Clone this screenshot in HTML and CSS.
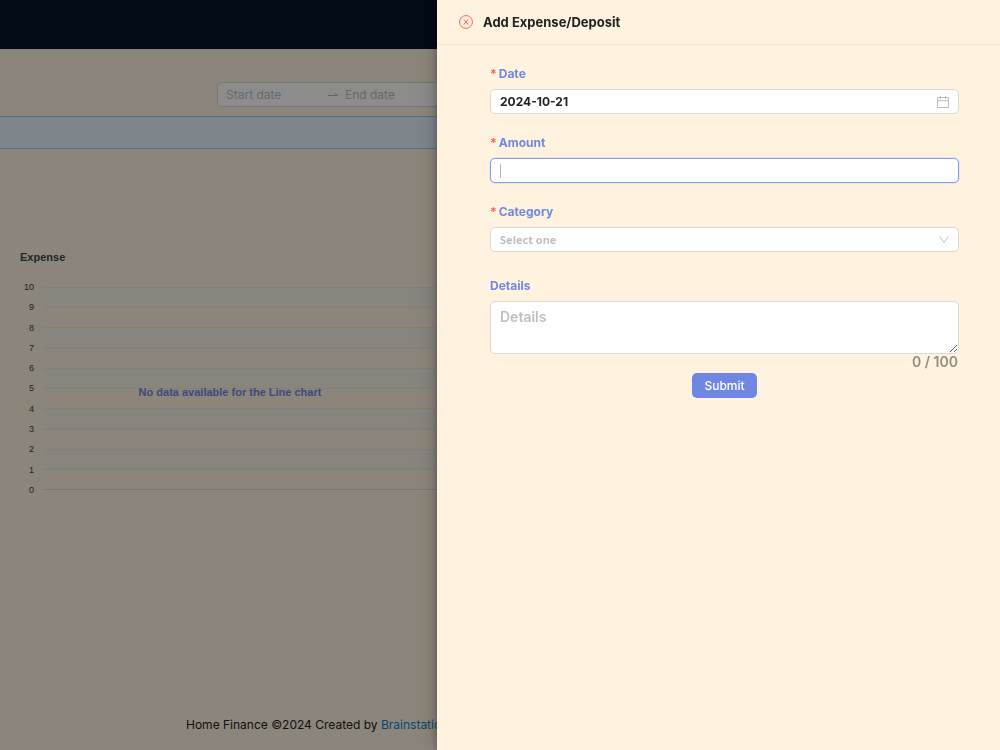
FILE: index.html
```
<!DOCTYPE html>
<html lang="en">
<head>
    <meta charset="UTF-8">
    <title>Home Finance</title>
    <link rel="stylesheet" href="styles.css">
</head>
<body>
    <div class="layout">
        <header class="header"></header>

        <main class="content">
            <div class="filters">
                <div class="range-picker">
                    <input type="text" placeholder="Start date" aria-label="Start date">
                    <svg class="range-arrow" viewBox="0 0 14 14" aria-hidden="true">
                        <path d="M2 8h10.5L9.5 5.5" />
                    </svg>
                    <input type="text" placeholder="End date" aria-label="End date">
                </div>
            </div>
            <div class="notice"></div>
            <div class="divider"></div>

            <section class="chart">
                <h2>Expense</h2>
                <svg class="line-chart" role="img" aria-label="Expense line chart">
                    <g class="bands">
                        <rect x="43" y="10" width="100%" height="20" />
                        <rect x="43" y="51" width="100%" height="20" />
                        <rect x="43" y="91" width="100%" height="20" />
                        <rect x="43" y="132" width="100%" height="20" />
                        <rect x="43" y="172" width="100%" height="20" />
                    </g>
                    <g class="grid">
                        <rect x="43" y="10" width="100%" height="1" />
                        <rect x="43" y="30" width="100%" height="1" />
                        <rect x="43" y="50" width="100%" height="1" />
                        <rect x="43" y="71" width="100%" height="1" />
                        <rect x="43" y="91" width="100%" height="1" />
                        <rect x="43" y="111" width="100%" height="1" />
                        <rect x="43" y="131" width="100%" height="1" />
                        <rect x="43" y="152" width="100%" height="1" />
                        <rect x="43" y="172" width="100%" height="1" />
                        <rect x="43" y="192" width="100%" height="1" />
                        <rect class="axis" x="43" y="212" width="100%" height="1" />
                    </g>
                    <g class="ticks">
                        <text x="34" y="13">10</text>
                        <text x="34" y="33">9</text>
                        <text x="34" y="54">8</text>
                        <text x="34" y="74">7</text>
                        <text x="34" y="94">6</text>
                        <text x="34" y="114">5</text>
                        <text x="34" y="135">4</text>
                        <text x="34" y="155">3</text>
                        <text x="34" y="175">2</text>
                        <text x="34" y="196">1</text>
                        <text x="34" y="216">0</text>
                    </g>
                    <text class="no-data" x="50%" y="119">No data available for the Line chart</text>
                </svg>
            </section>
        </main>

        <footer class="footer">
            Home Finance ©2024 Created by <a href="#">Brainstation-23</a>
        </footer>
    </div>

    <div class="mask"></div>

    <aside class="drawer" role="dialog" aria-labelledby="drawer-title">
        <div class="drawer-header">
            <button type="button" class="close" aria-label="Close">
                <svg viewBox="0 0 14 14" aria-hidden="true">
                    <circle cx="7" cy="7" r="6.4" />
                    <path d="M4.8 4.5l4.4 5M9.2 4.5l-4.4 5" />
                </svg>
            </button>
            <h1 id="drawer-title">Add Expense/Deposit</h1>
        </div>

        <form class="drawer-body">
            <div class="field">
                <label class="required" for="date">Date</label>
                <div class="control">
                    <input type="text" id="date" value="2024-10-21">
                    <svg class="icon" viewBox="0 0 12 12" aria-hidden="true">
                        <path d="M.5 1.5h11v10H.5zM.5 4.7h11M3.5 0v3M8.5 0v3" />
                    </svg>
                </div>
            </div>

            <div class="field">
                <label class="required" for="amount">Amount</label>
                <div class="control focused">
                    <input type="text" id="amount">
                </div>
            </div>

            <div class="field field-category">
                <label class="required" for="category">Category</label>
                <div class="control">
                    <select id="category">
                        <option>Select one</option>
                    </select>
                    <svg class="icon arrow" viewBox="0 0 10 10" aria-hidden="true">
                        <path d="M.8 1.5L5 7.8l4.2-6.3" />
                    </svg>
                </div>
            </div>

            <div class="field-details">
                <label for="details">Details</label>
                <textarea id="details" placeholder="Details" maxlength="100"></textarea>
                <div class="count">0 / 100</div>
            </div>

            <button type="submit" class="submit">Submit</button>
        </form>
    </aside>
</body>
</html>
```
FILE: styles.css
```
:root {
    --bg: #fff3e0;
    --primary: #6f87e2;
    --border: #d9d9d9;
    --placeholder: #bfbfbf;
    --text: #222222;
}

* {
    box-sizing: border-box;
}

body {
    margin: 0;
    font-family: Inter, sans-serif;
    font-size: 12px;
    color: var(--text);
    background: var(--bg);
    overflow: hidden;
}

input,
select,
textarea,
button {
    font: inherit;
    color: inherit;
}

/* Page behind the drawer */
.layout {
    min-height: 100vh;
    display: flex;
    flex-direction: column;
}

.header {
    height: 49px;
    background: #001529;
}

.content {
    flex-grow: 1;
}

.filters {
    display: flex;
    justify-content: center;
    padding: 33px 0 9px;
}

.range-picker {
    display: flex;
    align-items: center;
    width: 566px;
    height: 25px;
    padding: 0 8px;
    background: #ffffff;
    border: 1px solid var(--border);
    border-radius: 5px;
}

.range-picker input {
    width: 100px;
    padding: 0;
    border: none;
    background: none;
}

.range-picker input::placeholder {
    color: var(--placeholder);
    opacity: 1;
}

.range-arrow {
    width: 13px;
    height: 13px;
    margin-right: 6px;
    fill: none;
    stroke: #a8a8a8;
}

.notice {
    height: 33px;
    background: #e6f4ff;
    border-top: 1px solid #91caff;
    border-bottom: 1px solid #91caff;
}

.divider {
    height: 1px;
    margin: 37px 32px 0 0;
    background: #f5f0de;
}

.chart {
    width: 46%;
    padding-top: 62px;
    font-family: "Liberation Sans", Arial, sans-serif;
}

.chart h2 {
    margin: 0 20px 12px;
    font-size: 11px;
    line-height: 16px;
    color: #37474f;
}

.line-chart {
    display: block;
    width: 100%;
    height: 224px;
}

.bands {
    fill: #f7f2e8;
}

.grid {
    fill: #ebe9e6;
}

.grid .axis {
    fill: #d8dad3;
}

.ticks {
    font-size: 9px;
    text-anchor: end;
    fill: #373d3f;
}

.no-data {
    font-size: 11px;
    font-weight: bold;
    text-anchor: middle;
    fill: #6f87e2;
}

.footer {
    padding: 16px 0 16px 18.6%;
    line-height: 18px;
    white-space: nowrap;
}

.footer a {
    color: #0288d1;
    text-decoration: none;
}

.mask {
    position: fixed;
    inset: 0;
    background: rgba(0, 0, 0, 0.45);
}

/* Drawer */
.drawer {
    position: fixed;
    top: 0;
    right: 0;
    bottom: 0;
    width: 56.3%;
    background: var(--bg);
    box-shadow: -5px 0 13px rgba(0, 0, 0, 0.1), -2px 0 5px rgba(0, 0, 0, 0.14), -8px 0 24px rgba(0, 0, 0, 0.08);
}

.drawer-header {
    display: flex;
    align-items: center;
    gap: 10px;
    height: 45px;
    padding: 0 22px;
    border-bottom: 1px solid #f3e8d7;
}

.drawer-header h1 {
    margin: 0;
    font-size: 13px;
    font-weight: 700;
}

.close {
    display: flex;
    padding: 0;
    border: none;
    background: none;
    cursor: pointer;
}

.close svg {
    width: 14px;
    height: 14px;
    fill: none;
    stroke: #ff5c5c;
}

.drawer-body {
    display: flex;
    flex-direction: column;
    padding: 19px 41px 20px 53px;
    font-weight: 700;
}

.drawer-body label {
    display: block;
    height: 25px;
    line-height: 20px;
    color: var(--primary);
}

.required::before {
    content: "*";
    margin-right: 2px;
    color: #ff5c5c;
}

.field {
    margin-bottom: 19px;
}

.field-category {
    margin-bottom: 24px;
}

.control {
    display: flex;
    align-items: center;
    height: 25px;
    padding: 0 9px;
    background: #ffffff;
    border: 1px solid var(--border);
    border-radius: 5px;
}

.control input,
.control select {
    flex-grow: 1;
    min-width: 0;
    padding: 0;
    border: none;
    outline: none;
    background: none;
    appearance: none;
}

.control select {
    font-family: "Noto Sans", sans-serif;
    font-size: 11px;
    color: var(--placeholder);
}

.focused {
    border-color: #7f9af0;
    box-shadow: 0 0 0 1px rgba(127, 154, 240, 0.15);
}

/* resting text cursor of the active field */
.focused input {
    background: linear-gradient(#b5b5b5, #b5b5b5) 0 center / 1px 14px no-repeat;
}

.icon {
    width: 12px;
    height: 12px;
    fill: none;
    stroke: #bcbcbc;
}

.arrow {
    width: 10px;
    height: 10px;
}

textarea {
    display: block;
    width: 100%;
    height: 53px;
    padding: 5px 9px;
    line-height: 20px;
    background: #ffffff;
    border: 1px solid var(--border);
    border-radius: 5px;
    outline: none;
    resize: vertical;
}

textarea,
.count {
    font-size: 14px;
    font-weight: 600;
}

textarea::placeholder {
    color: var(--placeholder);
    opacity: 1;
}

.count {
    height: 19px;
    padding-right: 1px;
    line-height: 16px;
    text-align: right;
    color: #918b80;
}

.submit {
    align-self: center;
    height: 25px;
    padding: 0 12px;
    font-weight: 500;
    color: #ffffff;
    background: var(--primary);
    border: none;
    border-radius: 5px;
    cursor: pointer;
}
```
